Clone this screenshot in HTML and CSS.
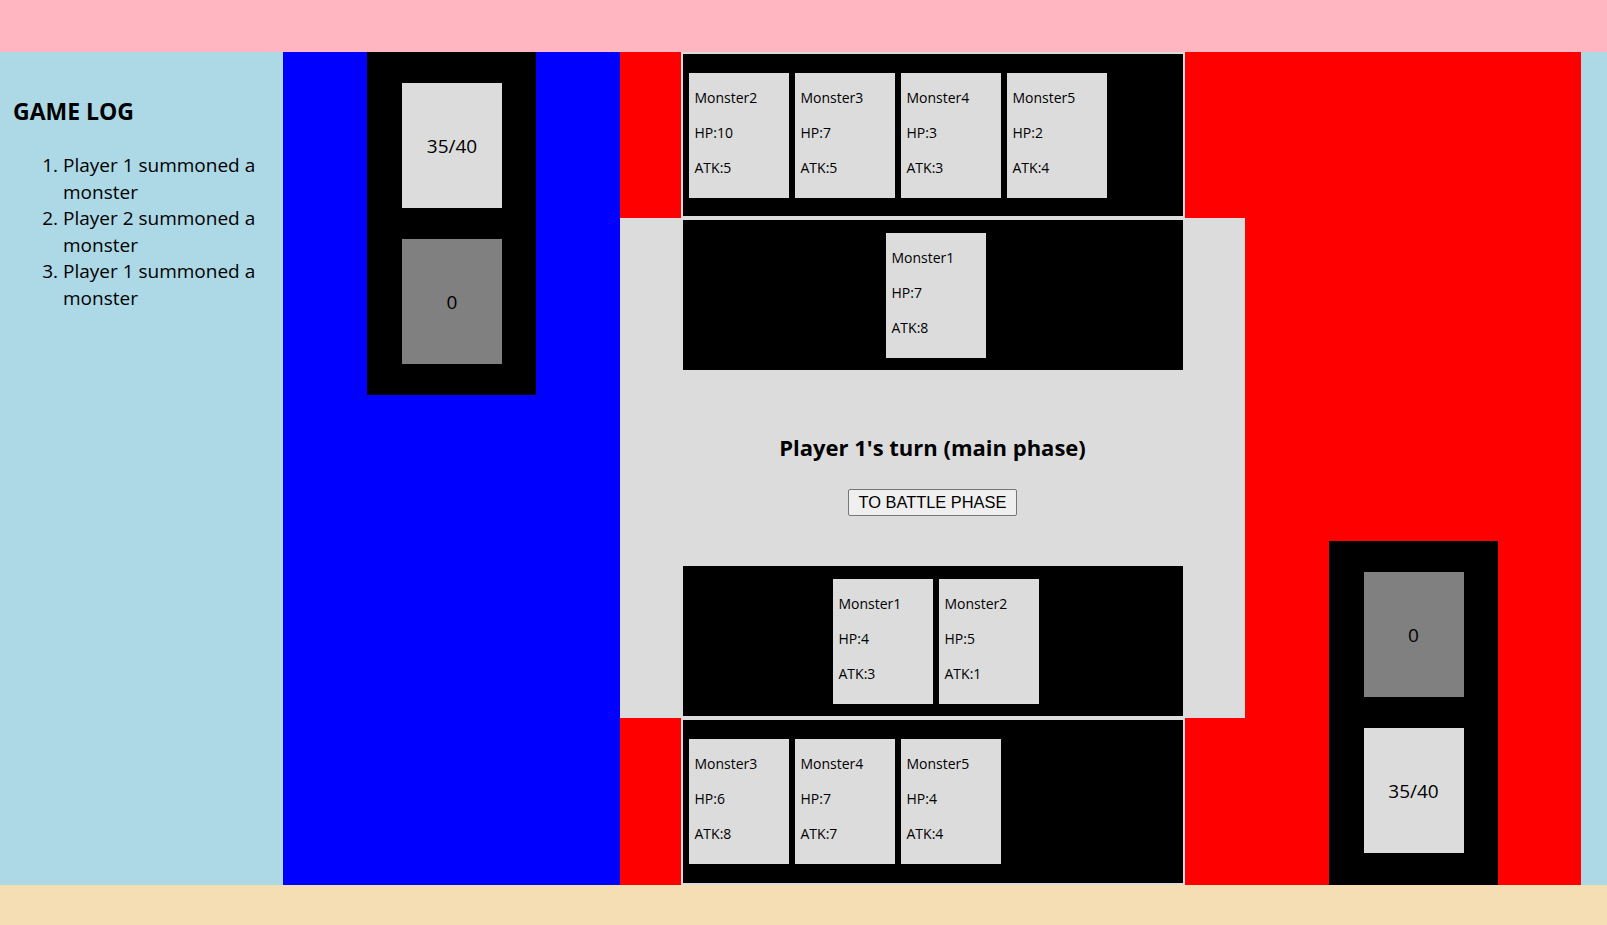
FILE: index.html
```html
<!DOCTYPE html>
<html>
<head>
<title>Monster Duel</title>
<link rel="stylesheet" href="styles.css">
</head>
<body>

<div class="header"></div>

<div class="main">
  <div class="log">
    <h2>GAME LOG</h2>
    <ol>
      <li>Player 1 summoned a monster</li>
      <li>Player 2 summoned a monster</li>
      <li>Player 1 summoned a monster</li>
    </ol>
  </div>

  <div class="game">
    <!-- player 2 side -->
    <div class="side side-blue">
      <div class="deckbox">
        <div class="deckcard">35/40</div>
        <div class="deckcard grave">0</div>
      </div>
    </div>

    <div class="center">
      <div class="hand">
        <div class="card"><p>Monster2</p><p>HP:10</p><p>ATK:5</p></div>
        <div class="card"><p>Monster3</p><p>HP:7</p><p>ATK:5</p></div>
        <div class="card"><p>Monster4</p><p>HP:3</p><p>ATK:3</p></div>
        <div class="card"><p>Monster5</p><p>HP:2</p><p>ATK:4</p></div>
      </div>

      <div class="board">
        <div class="field">
          <div class="card"><p>Monster1</p><p>HP:7</p><p>ATK:8</p></div>
        </div>

        <h2 class="turn">Player 1's turn (main phase)</h2>
        <button class="phasebtn">TO BATTLE PHASE</button>

        <div class="field field-bottom">
          <div class="card"><p>Monster1</p><p>HP:4</p><p>ATK:3</p></div>
          <div class="card"><p>Monster2</p><p>HP:5</p><p>ATK:1</p></div>
        </div>
      </div>

      <div class="hand hand-bottom">
        <div class="card"><p>Monster3</p><p>HP:6</p><p>ATK:8</p></div>
        <div class="card"><p>Monster4</p><p>HP:7</p><p>ATK:7</p></div>
        <div class="card"><p>Monster5</p><p>HP:4</p><p>ATK:4</p></div>
      </div>
    </div>

    <!-- player 1 side -->
    <div class="side side-red">
      <div class="deckbox deckbox-bottom">
        <div class="deckcard grave">0</div>
        <div class="deckcard">35/40</div>
      </div>
    </div>
  </div>
</div>

<div class="footer"></div>

</body>
</html>
```

FILE: styles.css
```css
body {
    margin: 0;
    font-family: "Open Sans", "Noto Sans", sans-serif;
    color: #000;
}

.header {
    height: 52px;
    background-color: lightpink;
}
.footer {
    height: 40px;
    background-color: wheat;
}

.main {
    display: flex;
    height: 833px;
    background-color: lightblue;
}

/* game log */
.log {
    width: 283px;
    box-sizing: border-box;
    padding: 0 13px;
}
.log h2 {
    margin: 43px 0 0;
    font-size: 23px;
    line-height: 32px;
}
.log ol {
    margin: 25px 0 0;
    padding-left: 50px;
    font-size: 19px;
    line-height: 26.6px;
}

/* play area */
.game {
    display: grid;
    grid-template-columns: 337px 625px 336px;
    background-color: red;
}

.side {
    display: flex;
    justify-content: center;
}
.side-blue {
    background-color: blue;
    align-items: flex-start;
}
.side-red {
    align-items: flex-end;
}

.deckbox {
    display: flex;
    flex-direction: column;
    gap: 31px;
    padding: 31px 34px 31px 35px;
    background-color: black;
}
.deckbox-bottom {
    padding-bottom: 32px;
}
.deckcard {
    width: 100px;
    height: 125px;
    display: flex;
    align-items: center;
    justify-content: center;
    background-color: gainsboro;
    font-size: 19px;
}
.deckcard.grave {
    background-color: gray;
}

.center {
    display: flex;
    flex-direction: column;
}

.hand {
    box-sizing: border-box;
    width: 504px;
    height: 166px;
    margin: 0 auto;
    border: 2px solid gainsboro;
    background-color: black;
    display: flex;
    align-items: center;
}
.hand-bottom {
    height: 167px;
}

.board {
    height: 500px;
    display: flex;
    flex-direction: column;
    align-items: center;
    background-color: gainsboro;
}

.field {
    box-sizing: border-box;
    width: 504px;
    height: 154px;
    border: 2px solid gainsboro;
    background-color: black;
    display: flex;
    justify-content: center;
    align-items: center;
}
.field-bottom {
    margin-top: auto;
}

.card {
    box-sizing: border-box;
    width: 100px;
    height: 125px;
    margin-left: 6px;
    padding: 0 6px;
    background-color: gainsboro;
    font-size: 14px;
    line-height: 20px;
}
.card p {
    margin: 15px 0;
}

.turn {
    margin: 60px 0 0;
    font-size: 22px;
    line-height: 30px;
}

.phasebtn {
    margin-top: 27px;
    padding: 3px 10px;
    font-family: "Liberation Sans", Arial, sans-serif;
    font-size: 16.4px;
    line-height: 19px;
    color: black;
    background-color: #efefef;
    border: 1px solid #767676;
    border-radius: 2px;
}
```
